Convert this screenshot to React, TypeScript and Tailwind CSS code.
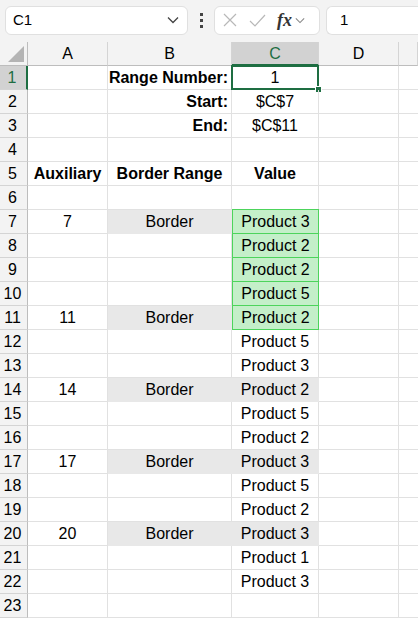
import React from 'react';

type Row = {
  a?: string;
  b?: string;
  c?: string;
  bold?: boolean;
  bAlign?: 'right' | 'center';
  grayB?: boolean;
  green?: boolean;
};

const ROWS: Row[] = [
  { b: 'Range Number:', c: '1', bold: true, bAlign: 'right' },
  { b: 'Start:', c: '$C$7', bold: true, bAlign: 'right' },
  { b: 'End:', c: '$C$11', bold: true, bAlign: 'right' },
  {},
  { a: 'Auxiliary', b: 'Border Range', c: 'Value', bold: true, bAlign: 'center' },
  {},
  { a: '7', b: 'Border', c: 'Product 3', grayB: true, green: true },
  { c: 'Product 2', green: true },
  { c: 'Product 2', green: true },
  { c: 'Product 5', green: true },
  { a: '11', b: 'Border', c: 'Product 2', grayB: true, green: true },
  { c: 'Product 5' },
  { c: 'Product 3' },
  { a: '14', b: 'Border', c: 'Product 2', grayB: true },
  { c: 'Product 5' },
  { c: 'Product 2' },
  { a: '17', b: 'Border', c: 'Product 3', grayB: true },
  { c: 'Product 5' },
  { c: 'Product 2' },
  { a: '20', b: 'Border', c: 'Product 3', grayB: true },
  { c: 'Product 1' },
  { c: 'Product 3' },
  {},
];

const Chevron = () => (
  <svg width="12" height="8" viewBox="0 0 12 8" fill="none" stroke="#444" strokeWidth="1.3">
    <path d="M1 1.5 L6 6.5 L11 1.5" />
  </svg>
);

const App: React.FC = () => {
  return (
    <div className="w-[418px] h-[618px] overflow-hidden bg-[#f3f3f3] text-black font-['Liberation_Sans',Arial,sans-serif]">
      {/* Formula bar */}
      <div className="h-[40px] flex items-center pl-[5px]">
        <div className="w-[183px] h-[29px] bg-white border border-[#e0e0e0] rounded-[6px] flex items-center justify-between pl-[7px] pr-[8px] text-[15px]">
          <span>C1</span>
          <Chevron />
        </div>
        <div className="w-[26px] flex flex-col items-center gap-[3px]">
          <span className="w-[3px] h-[3px] bg-[#444]" />
          <span className="w-[3px] h-[3px] bg-[#444]" />
          <span className="w-[3px] h-[3px] bg-[#444]" />
        </div>
        <div className="w-[106px] h-[29px] bg-white border border-[#e0e0e0] rounded-[6px] flex items-center pl-[8px] pr-[4px]">
          <svg width="14" height="14" viewBox="0 0 14 14" stroke="#b8b8b8" strokeWidth="1.2">
            <path d="M1 1 L13 13 M13 1 L1 13" />
          </svg>
          <svg className="ml-[12px]" width="17" height="13" viewBox="0 0 17 13" fill="none" stroke="#b8b8b8" strokeWidth="1.2">
            <path d="M1 7 L6 12 L16 1" />
          </svg>
          <span className="ml-[11px] italic font-['Liberation_Serif',serif] text-[18px] leading-none text-[#333] font-semibold">fx</span>
          <span className="ml-[3px]">
            <svg width="10" height="7" viewBox="0 0 12 8" fill="none" stroke="#888" strokeWidth="1.3">
              <path d="M1 1.5 L6 6.5 L11 1.5" />
            </svg>
          </span>
        </div>
        <div className="ml-[6px] flex-1 h-[29px] bg-white border border-[#e0e0e0] border-r-0 rounded-l-[6px] flex items-center pl-[13px] text-[15px]">
          1
        </div>
      </div>

      {/* Sheet */}
      <div className="mt-[2px] grid grid-cols-[28px_80px_124px_87px_80px_1fr] auto-rows-[24px] bg-white">
        {/* Column header row */}
        <div className="bg-[#f3f3f3] border-r border-b border-[#bdbdbd] relative">
          <span className="absolute right-[3px] bottom-[3px] w-0 h-0 border-l-[16px] border-l-transparent border-b-[16px] border-b-[#b4b4b4]" />
        </div>
        {['A', 'B', 'C', 'D', ''].map((l) => (
          <div
            key={l || 'E'}
            className={`flex items-center justify-center text-[16px] pt-[1px] border-r border-[#d4d4d4] ${
              l === 'C'
                ? 'bg-[#d2d2d2] text-[#1e6e42] border-b-2 border-b-[#1e6e42]'
                : 'bg-[#f3f3f3] border-b border-b-[#bdbdbd]'
            }`}
          >
            {l}
          </div>
        ))}

        {ROWS.map((r, i) => {
          const n = i + 1;
          return (
            <React.Fragment key={n}>
              <div
                className={`flex items-center justify-center pr-[2px] text-[16px] border-b border-[#d4d4d4] ${
                  n === 1
                    ? 'bg-[#d2d2d2] text-[#1e6e42] border-r-2 border-r-[#1e6e42]'
                    : 'bg-[#f3f3f3] border-r border-r-[#bdbdbd]'
                }`}
              >
                {n}
              </div>
              <div
                className={`flex items-center justify-center text-[16px] border-r border-b border-[#e1e1e1] ${
                  r.bold ? 'font-bold' : ''
                }`}
              >
                {r.a}
              </div>
              <div
                className={`flex items-center text-[16px] border-r border-b ${
                  r.bAlign === 'right' ? 'justify-end pr-[3px]' : 'justify-center'
                } ${r.bold ? 'font-bold' : ''} ${
                  r.grayB ? 'bg-[#e8e8e8] border-[#e8e8e8]' : 'border-[#e1e1e1]'
                }`}
              >
                {r.b}
              </div>
              <div
                className={`relative flex items-center justify-center text-[16px] ${r.bold && n === 5 ? 'font-bold' : ''} ${
                  r.green
                    ? 'bg-[#c4efc9] border border-[#4dd45c] -mt-px'
                    : r.grayB
                    ? 'bg-[#e8e8e8] border-r border-b border-[#e8e8e8]'
                    : 'border-r border-b border-[#e1e1e1]'
                }`}
              >
                {r.c}
                {n === 1 && (
                  <>
                    <span className="absolute -left-px -top-px -right-px -bottom-px border-2 border-[#1e6e42] pointer-events-none" />
                    <span className="absolute -right-[4px] -bottom-[4px] w-[7px] h-[7px] bg-[#1e6e42] border border-white" />
                  </>
                )}
              </div>
              <div className="border-r border-b border-[#e1e1e1]" />
              <div className="border-b border-[#e1e1e1]" />
            </React.Fragment>
          );
        })}
      </div>
    </div>
  );
};

export default App;
